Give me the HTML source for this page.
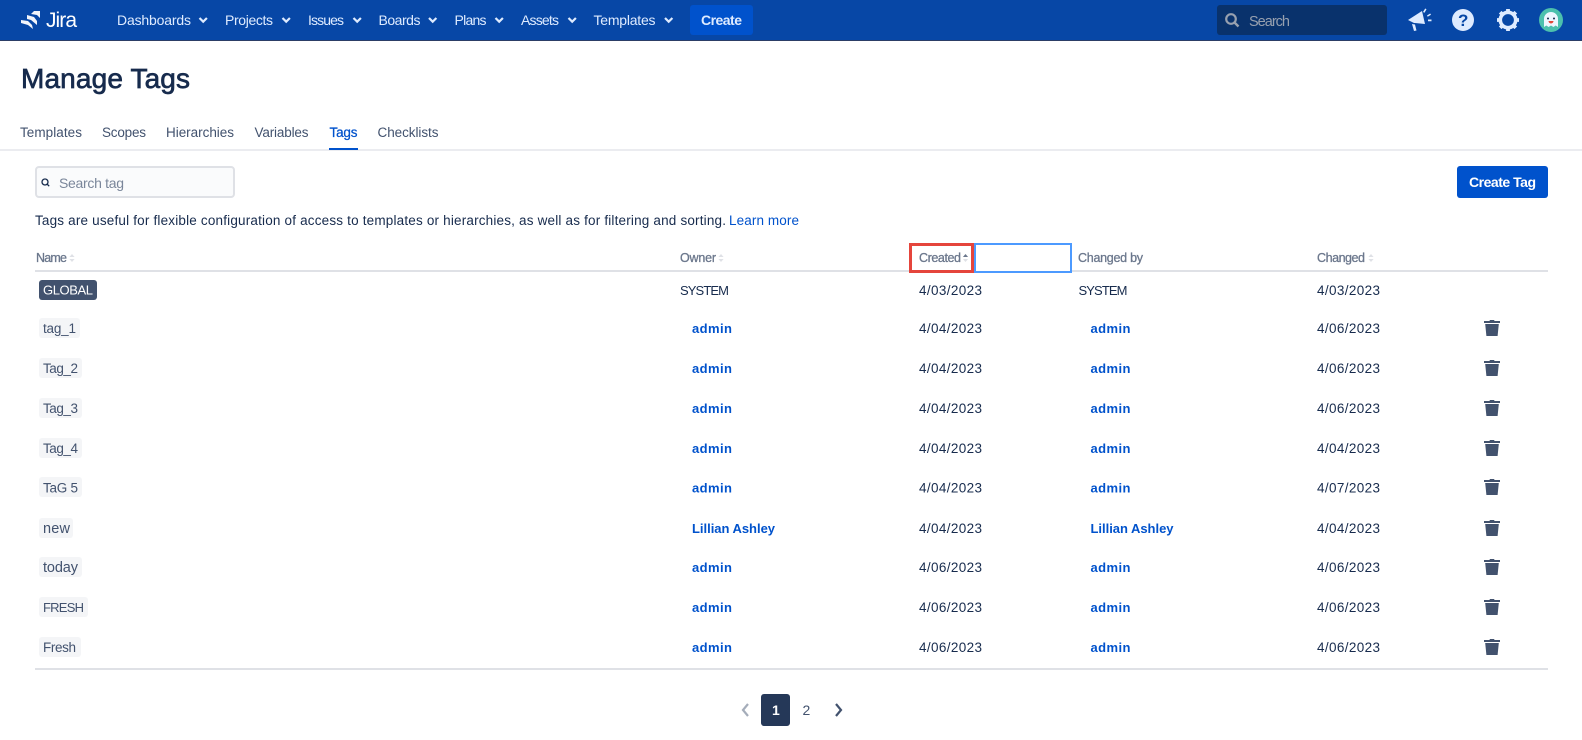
<!DOCTYPE html>
<html><head><meta charset="utf-8"><title>Manage Tags</title>
<style>
html,body{margin:0;padding:0;background:#fff;width:1582px;height:740px;overflow:hidden}
svg{display:block;font-family:"Liberation Sans",sans-serif}
text{font-size:13.5px;fill:#172b4d}
.n{font-size:14px;fill:#deebff}
.t{font-size:13.5px;fill:#42526e}
.h{font-size:12.5px;fill:#6b778c;stroke:#6b778c;stroke-width:.3}
.l{fill:#0052cc;font-weight:bold;font-size:13px}
.s{font-size:13px}
.g{fill:#42526e}
.c{fill:none;stroke:#deebff;stroke-width:2.2}
</style></head><body>
<svg width="1582" height="740" viewBox="0 0 1582 740" xmlns="http://www.w3.org/2000/svg">
<defs>
<symbol id="tr" viewBox="0 0 16 16" width="16" height="16"><path fill="#42526e" d="M6 0h4l.6 1H16v2H0V1h5.4zM1.2 4h13.6L13.6 16H2.4z"/></symbol>
<symbol id="so" viewBox="0 0 6 8" width="6" height="8"><path fill="#dfe1e6" d="M3 0l2.6 3H.4zM3 8L.4 5h5.200z"/></symbol>
</defs>

<rect width="1582" height="40" fill="#0747a6"/>
<rect y="40" width="1582" height="1" fill="#2c3e66"/>
<path fill="#fff" d="M34 11h6v7l-3-3-6-1zM27 15l7 2 3 4v4l-6-5-4-1zM21 20l7 1 4 4 1 4-5-4-7-2z" opacity=".95"/>
<text x="46" y="27" textLength="31" lengthAdjust="spacing" style="font-size:21px;fill:#fff">Jira</text>

<text class="n" x="117" y="25" textLength="74">Dashboards</text><path class="c" d="M199.5 18l3.7 3.7 3.7-3.7"/>
<text class="n" x="225" y="25" textLength="48">Projects</text><path class="c" d="M282.5 18l3.7 3.7 3.7-3.7"/>
<text class="n" x="308" y="25" textLength="36">Issues</text><path class="c" d="M353.5 18l3.7 3.7 3.700-3.700"/>
<text class="n" x="378.500" y="25" textLength="42">Boards</text><path class="c" d="M429 18l3.7 3.7 3.7-3.7"/>
<text class="n" x="454.500" y="25" textLength="32">Plans</text><path class="c" d="M495.500 18l3.7 3.7 3.7-3.7"/>
<text class="n" x="521" y="25" textLength="38">Assets</text><path class="c" d="M568.5 18l3.7 3.7 3.7-3.7"/>
<text class="n" x="593.500" y="25" textLength="62">Templates</text><path class="c" d="M665 18l3.7 3.7 3.7-3.7"/>
<rect x="690" y="5" width="63" height="30" rx="3" fill="#0052cc"/>
<text x="701" y="25" textLength="41" style="font-size:14px;font-weight:bold;fill:#deebff">Create</text>

<rect x="1217" y="5" width="170" height="30" rx="3" fill="#09326c"/>
<circle cx="1231" cy="19" r="4.8" fill="none" stroke="#97a0af" stroke-width="2.2"/>
<path d="M1234.5 22.5l4 4" stroke="#97a0af" stroke-width="2.4"/>
<text x="1249" y="26" textLength="41" style="font-size:14.500px;fill:#97a0af">Search</text>

<path fill="#deebff" d="M1408 20l14-9 3 13-10-1-1 0zM1412 24l3 .5 1.500 6-2.500.5zM1423 12l2.200-3.500 1.300.8-2 3.500zM1427 15.500l3.200-2 .8 1.300-3.300 2zM1428 19.500h3.500v1.800h-3.500z"/>
<circle cx="1463" cy="20" r="11" fill="#deebff"/>
<text x="1458" y="26" style="font-size:17px;font-weight:bold;fill:#0747a6">?</text>
<circle cx="1508" cy="20" r="7.700" fill="none" stroke="#deebff" stroke-width="3.600"/>
<path fill="none" stroke="#deebff" stroke-width="3.800" d="M1508 9v3M1508 28v3M1497 20h3M1516 20h3M1500.2 12.2l2.1 2.1M1513.7 25.7l2.1 2.1M1500.2 27.8l2.1-2.1M1513.7 14.3l2.1-2.1"/>
<circle cx="1551" cy="20" r="12" fill="#4cc0ad"/>
<path fill="#eef6ff" d="M1544 27v-8a7 7 0 0 1 14 0v8l-2.3-1.5-2.3 1.5-2.4-1.5-2.4 1.5-2.300-1.500z"/>
<circle cx="1548" cy="18.500" r="1" fill="#172b4d"/><circle cx="1554" cy="18.500" r="1" fill="#172b4d"/>
<path fill="#e5493a" d="M1548.500 21h5a2.500 2.500 0 0 1-5 0z"/>

<text x="21" y="88" textLength="169" style="font-size:28px;fill:#172b4d;stroke:#172b4d;stroke-width:.7">Manage Tags</text>

<text class="t" x="20" y="137" textLength="62">Templates</text>
<text class="t" x="102" y="137" textLength="44">Scopes</text>
<text class="t" x="166" y="137" textLength="68">Hierarchies</text>
<text class="t" x="254.500" y="137" textLength="54">Variables</text>
<text x="329.500" y="137" textLength="28" style="font-size:13.500px;fill:#0052cc;stroke:#0052cc;stroke-width:.25">Tags</text>
<text class="t" x="377.500" y="137" textLength="61">Checklists</text>
<rect y="149" width="1582" height="2" fill="#ebecf0"/>
<rect x="329" y="148" width="29" height="2" fill="#0052cc"/>

<rect x="36" y="167" width="198" height="30" rx="3" fill="#fafbfc" stroke="#dfe1e6" stroke-width="2"/>
<circle cx="45" cy="182" r="3" fill="none" stroke="#172b4d" stroke-width="1.300"/>
<path d="M47 184l2.200 2.200" stroke="#172b4d" stroke-width="1.300"/>
<text x="59" y="188" textLength="65" style="font-size:14px;fill:#7a869a">Search tag</text>

<rect x="1457" y="166" width="91" height="32" rx="3" fill="#0052cc"/>
<text x="1469" y="187" textLength="67" style="font-size:14px;font-weight:bold;fill:#fff">Create Tag</text>

<text x="35" y="225" textLength="691" style="font-size:13.500px">Tags are useful for flexible configuration of access to templates or hierarchies, as well as for filtering and sorting.</text>
<text x="729" y="225" textLength="70" style="font-size:13.500px;fill:#0052cc">Learn more</text>

<text class="h" x="36" y="262" textLength="31">Name</text><use href="#so" x="69" y="254"/>
<text class="h" x="680" y="262" textLength="36">Owner</text><use href="#so" x="718" y="254"/>
<text class="h" x="1078" y="262" textLength="65">Changed by</text>
<text class="h" x="1317" y="262" textLength="48">Changed</text><use href="#so" x="1368" y="254"/>

<rect x="35" y="270" width="1513" height="2" fill="#dfe1e6"/>
<rect x="35" y="668" width="1513" height="2" fill="#dfe1e6"/>

<rect x="975" y="244" width="96" height="28" fill="#fff" stroke="#4c9aff" stroke-width="2"/>
<rect x="910.500" y="244.500" width="62" height="27" fill="#fff" stroke="#e5453c" stroke-width="3"/>
<text class="h" x="919" y="262" textLength="42">Created</text>
<path fill="#6b778c" d="M965.500 254l2.600 3h-5.200z"/><path fill="#dfe1e6" d="M965.500 262l-2.600-3h5.200z"/>

<rect x="39" y="280" width="58" height="20" rx="3" fill="#42526e"/>
<text class="s" x="43" y="294.500" textLength="50" style="fill:#fff">GLOBAL</text>
<text class="s" x="680" y="295" textLength="49">SYSTEM</text>
<text x="919" y="295" textLength="63">4/03/2023</text>
<text class="s" x="1078.500" y="295" textLength="49">SYSTEM</text>
<text x="1317" y="295" textLength="63">4/03/2023</text>

<rect x="39" y="318" width="41" height="20" rx="3" fill="#f4f5f7"/>
<text x="43" y="333" textLength="33" class="t">tag_1</text>
<text class="l" x="692" y="333" textLength="40">admin</text>
<text x="919" y="333" textLength="63">4/04/2023</text>
<text class="l" x="1090.500" y="333" textLength="40">admin</text>
<text x="1317" y="333" textLength="63">4/06/2023</text>
<use href="#tr" x="1484" y="320"/>

<rect x="39" y="358" width="43" height="20" rx="3" fill="#f4f5f7"/>
<text x="43" y="373" textLength="35" class="t">Tag_2</text>
<text class="l" x="692" y="373" textLength="40">admin</text>
<text x="919" y="373" textLength="63">4/04/2023</text>
<text class="l" x="1090.500" y="373" textLength="40">admin</text>
<text x="1317" y="373" textLength="63">4/06/2023</text>
<use href="#tr" x="1484" y="360"/>

<rect x="39" y="398" width="43" height="20" rx="3" fill="#f4f5f7"/>
<text x="43" y="413" textLength="35" class="t">Tag_3</text>
<text class="l" x="692" y="413" textLength="40">admin</text>
<text x="919" y="413" textLength="63">4/04/2023</text>
<text class="l" x="1090.500" y="413" textLength="40">admin</text>
<text x="1317" y="413" textLength="63">4/06/2023</text>
<use href="#tr" x="1484" y="400"/>

<rect x="39" y="438" width="43" height="20" rx="3" fill="#f4f5f7"/>
<text x="43" y="453" textLength="35" class="t">Tag_4</text>
<text class="l" x="692" y="453" textLength="40">admin</text>
<text x="919" y="453" textLength="63">4/04/2023</text>
<text class="l" x="1090.500" y="453" textLength="40">admin</text>
<text x="1317" y="453" textLength="63">4/04/2023</text>
<use href="#tr" x="1484" y="440"/>

<rect x="39" y="477" width="43" height="20" rx="3" fill="#f4f5f7"/>
<text x="43" y="492.500" textLength="35" class="t">TaG 5</text>
<text class="l" x="692" y="492.500" textLength="40">admin</text>
<text x="919" y="492.500" textLength="63">4/04/2023</text>
<text class="l" x="1090.500" y="492.500" textLength="40">admin</text>
<text x="1317" y="492.500" textLength="63">4/07/2023</text>
<use href="#tr" x="1484" y="479"/>

<rect x="39" y="518" width="34" height="20" rx="3" fill="#f4f5f7"/>
<text x="43" y="533" textLength="27" class="t" style="font-size:14.500px">new</text>
<text class="l" x="692" y="533" textLength="83">Lillian Ashley</text>
<text x="919" y="533" textLength="63">4/04/2023</text>
<text class="l" x="1090.500" y="533" textLength="83">Lillian Ashley</text>
<text x="1317" y="533" textLength="63">4/04/2023</text>
<use href="#tr" x="1484" y="520"/>

<rect x="39" y="557" width="43" height="20" rx="3" fill="#f4f5f7"/>
<text x="43" y="572" textLength="35" class="t" style="font-size:14.500px">today</text>
<text class="l" x="692" y="572" textLength="40">admin</text>
<text x="919" y="572" textLength="63">4/06/2023</text>
<text class="l" x="1090.500" y="572" textLength="40">admin</text>
<text x="1317" y="572" textLength="63">4/06/2023</text>
<use href="#tr" x="1484" y="559"/>

<rect x="39" y="597" width="49" height="20" rx="3" fill="#f4f5f7"/>
<text x="43" y="612" textLength="41" class="t" style="font-size:13px">FRESH</text>
<text class="l" x="692" y="612" textLength="40">admin</text>
<text x="919" y="612" textLength="63">4/06/2023</text>
<text class="l" x="1090.500" y="612" textLength="40">admin</text>
<text x="1317" y="612" textLength="63">4/06/2023</text>
<use href="#tr" x="1484" y="599"/>

<rect x="39" y="637" width="42" height="20" rx="3" fill="#f4f5f7"/>
<text x="43" y="652" textLength="33" class="t">Fresh</text>
<text class="l" x="692" y="652" textLength="40">admin</text>
<text x="919" y="652" textLength="63">4/06/2023</text>
<text class="l" x="1090.500" y="652" textLength="40">admin</text>
<text x="1317" y="652" textLength="63">4/06/2023</text>
<use href="#tr" x="1484" y="639"/>

<path d="M748 704l-5 6 5 6" fill="none" stroke="#a5adba" stroke-width="2.200"/>
<rect x="761" y="694" width="29" height="32" rx="3" fill="#253858"/>
<text x="772" y="715" style="font-size:14px;font-weight:bold;fill:#fff">1</text>
<text x="802.500" y="715" style="font-size:14px;fill:#42526e">2</text>
<path d="M836 704l5 6-5 6" fill="none" stroke="#42526e" stroke-width="2.200"/>
</svg>
</body></html>
